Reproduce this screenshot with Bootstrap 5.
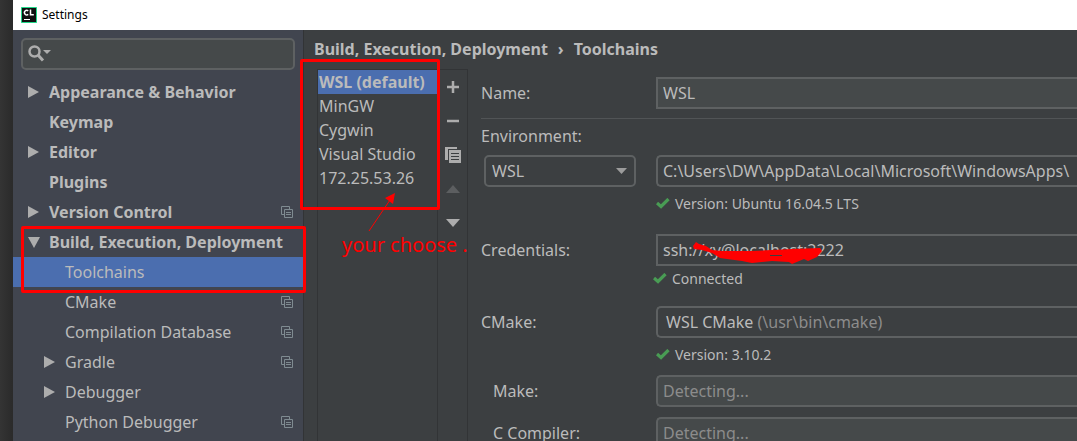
<!DOCTYPE html>
<html lang="en">
<head>
<meta charset="utf-8">
<meta name="viewport" content="width=device-width, initial-scale=1">
<title>Settings</title>
<link href="https://cdn.jsdelivr.net/npm/bootstrap@5.3.0/dist/css/bootstrap.min.css" rel="stylesheet">
<style>
  :root { --panel: #3c3f41; --side: #41454f; --pick: #4b6eaf; --ink: #bbbbbb; --line: #5e6162; --note: #ff0000; }
  body { background: linear-gradient(90deg, #343434, #2b2b2b 12px); color: var(--ink); font: 16px/24px "Noto Sans", "Open Sans", sans-serif; }
  .app-window { margin-left: 13px; background: var(--panel); }
  .app-body, .main-pane, .form-pane { min-width: 0; min-height: 0; }
  .title-bar { height: 30px; background: #fff; color: #000; font-size: 12px; padding-left: 8px; gap: 5px; }
  .side-pane { width: 291px; background: var(--side); border-right: 1px solid #323436; }
  .search-wrap { margin: 8px 8px 7px; }
  .search-box { height: 32px; padding: 0 8px 0 32px; background: #45494a; border: 2px solid var(--line); border-radius: 5px; color: var(--ink); }
  .search-icon { left: 7px; top: 7px; }
  .tree-item { height: 30px; padding: 0 10px 0 15px; color: var(--ink); text-decoration: none; white-space: nowrap; }
  .tree-item .twisty { width: 21px; flex: none; }
  .tree-item.child { padding-left: 31px; }
  .tree-item.top, .crumbs, .chain-list button.active { font-weight: 700; }
  .tree-item.active { background: var(--pick); }
  .frame { border: 3px solid var(--note); border-radius: 2px; pointer-events: none; }
  .frame-tree { inset: -1px -3px -6px 8px; }
  .frame-list { left: -18px; right: -3px; top: -11px; height: 151px; }
  .crumbs { padding: 7px 10px 8px; gap: 10px; }
  .chain-list { width: 120px; margin-left: 13px; border: solid #323436; border-width: 1px 0 0 1px; }
  .chain-list button { display: block; width: 100%; height: 24px; padding: 0 0 0 1px; border: 0; background: none; color: var(--ink); text-align: left; white-space: nowrap; }
  .chain-list button.active { background: var(--pick); }
  .chain-tools { width: 31px; border: solid #323436; border-width: 1px 1px 0; }
  .chain-tools button { height: 34px; border: 0; padding: 0; background: none; display: flex; align-items: center; justify-content: center; }
  .callout { left: 24px; top: 119px; width: 150px; color: var(--note); }
  .callout span { font-size: 20px; line-height: 28px; white-space: nowrap; }
  .form-pane { padding: 8px 0 0 13px; }
  .form-pane label { width: 175px; flex: none; white-space: nowrap; }
  .form-pane .indent { padding-left: 12px; }
  .field { height: 32px; padding: 0 5px; min-width: 0; flex: 1; border: 2px solid var(--line); border-right: 0; background: var(--panel); color: var(--ink); }
  .field.filled { background: #45494a; }
  .field.soft { border-radius: 5px 0 0 5px; }
  .field:disabled { color: #8c8c8c; opacity: 1; }
  .rule { border-top: 1px solid #515456; margin: 9px 0 5px; }
  .env-label { margin-bottom: 7px; }
  .env-select { width: 152px; height: 32px; margin: 0 20px 0 3px; padding: 0 6px; appearance: none; border: 2px solid var(--line); border-radius: 5px; background: none; color: var(--ink); }
  .env-arrow { right: 29px; top: 13px; pointer-events: none; }
  .status { margin: 7px 0 0 175px; gap: 5px; font-size: 14px; line-height: 20px; }
  .status.near { margin: 3px 0 17px 172px; }
  .cred-row { margin-top: 20px; }
  .tool-row { margin-top: 10px; }
  .mute { color: #8c8c8c; }
  .scribble { left: 36px; top: 8px; }
</style>
</head>
<body class="vh-100 overflow-hidden">
<svg class="d-none">
  <symbol id="right" viewBox="0 0 11 12"><path d="M0 0 11 6 0 12z" fill="#adadad"/></symbol>
  <symbol id="down" viewBox="0 0 12 11"><path d="M0 0H12L6 11z" fill="#adadad"/></symbol>
  <symbol id="copy" viewBox="0 0 12 12"><path d="M3 8.500H.5V.5H8.500V3" fill="none" stroke="#7f8b91"/><path d="M3.500 3.500h8v8h-8zM5 6.500h5M5 8.500h5" fill="none" stroke="#7f8b91"/></symbol>
  <symbol id="tick" viewBox="0 0 14 12"><path d="M1 5 5 8.500 12.500 1" fill="none" stroke="#499c54" stroke-width="3.200"/></symbol>
</svg>
<div class="app-window h-100 d-flex flex-column">
  <header class="title-bar d-flex align-items-center flex-shrink-0">
    <svg width="16" height="16" viewBox="0 0 16 16"><path d="M.5.5h15v15H.5z" fill="#101010" stroke="#21d789"/><path d="M7.200 3.800A2.300 2.300 0 1 0 7.200 7.400M9.500 2.500V7.800H12.800" fill="none" stroke="#fff" stroke-width="1.500"/><path d="M3 12.500h6" stroke="#fff"/></svg>
    <span>Settings</span>
  </header>
  <div class="app-body d-flex flex-grow-1">
    <aside class="side-pane flex-shrink-0">
      <div class="search-wrap position-relative">
        <input class="search-box w-100" type="search" aria-label="Search settings">
        <svg class="search-icon position-absolute" width="24" height="18" viewBox="0 0 24 18"><circle cx="6.500" cy="6.500" r="5" fill="none" stroke="#adadad" stroke-width="2.500"/><path d="M10 10 15 15.500" stroke="#adadad" stroke-width="3"/><path d="M15 5h8l-4 4z" fill="#adadad"/></svg>
      </div>
      <nav>
        <a href="#" class="tree-item top d-flex align-items-center"><span class="twisty d-flex"><svg width="11" height="12"><use href="#right"/></svg></span>Appearance &amp; Behavior</a>
        <a href="#" class="tree-item top d-flex align-items-center"><span class="twisty"></span>Keymap</a>
        <a href="#" class="tree-item top d-flex align-items-center"><span class="twisty d-flex"><svg width="11" height="12"><use href="#right"/></svg></span>Editor</a>
        <a href="#" class="tree-item top d-flex align-items-center"><span class="twisty"></span>Plugins</a>
        <a href="#" class="tree-item top d-flex align-items-center"><span class="twisty d-flex"><svg width="11" height="12"><use href="#right"/></svg></span>Version Control<svg class="ms-auto" width="12" height="12"><use href="#copy"/></svg></a>
        <div class="position-relative">
          <a href="#" class="tree-item top d-flex align-items-center"><span class="twisty d-flex"><svg width="12" height="11"><use href="#down"/></svg></span>Build, Execution, Deployment</a>
          <a href="#" class="tree-item child active d-flex align-items-center"><span class="twisty"></span>Toolchains</a>
          <div class="frame frame-tree position-absolute"></div>
        </div>
        <a href="#" class="tree-item child d-flex align-items-center"><span class="twisty"></span>CMake<svg class="ms-auto" width="12" height="12"><use href="#copy"/></svg></a>
        <a href="#" class="tree-item child d-flex align-items-center"><span class="twisty"></span>Compilation Database<svg class="ms-auto" width="12" height="12"><use href="#copy"/></svg></a>
        <a href="#" class="tree-item child d-flex align-items-center"><span class="twisty d-flex"><svg width="11" height="12"><use href="#right"/></svg></span>Gradle<svg class="ms-auto" width="12" height="12"><use href="#copy"/></svg></a>
        <a href="#" class="tree-item child d-flex align-items-center"><span class="twisty d-flex"><svg width="11" height="12"><use href="#right"/></svg></span>Debugger</a>
        <a href="#" class="tree-item child d-flex align-items-center"><span class="twisty"></span>Python Debugger<svg class="ms-auto" width="12" height="12"><use href="#copy"/></svg></a>
      </nav>
    </aside>
    <main class="main-pane d-flex flex-column flex-grow-1">
      <div class="crumbs d-flex"><span>Build, Execution, Deployment</span><span>›</span><span>Toolchains</span></div>
      <div class="d-flex flex-grow-1">
        <div class="chain-list position-relative flex-shrink-0">
          <button class="active">WSL (default)</button>
          <button>MinGW</button>
          <button>Cygwin</button>
          <button>Visual Studio</button>
          <button>172.25.53.26</button>
          <div class="frame frame-list position-absolute"></div>
          <div class="callout position-absolute">
            <svg class="d-block" width="70" height="42" viewBox="0 0 70 42"><path d="M27 42 48 11" stroke="#f00"/><path d="M53 4 43 9 51 15z" fill="#f00"/></svg>
            <span>your choose .</span>
          </div>
        </div>
        <div class="chain-tools d-flex flex-column flex-shrink-0">
          <button aria-label="Add"><svg width="14" height="14"><path d="M7 1V13M1 7H13" stroke="#adadad" stroke-width="2.500"/></svg></button>
          <button aria-label="Remove"><svg width="14" height="14"><path d="M1 7H13" stroke="#adadad" stroke-width="2.500"/></svg></button>
          <button aria-label="Copy"><svg width="16" height="18"><path d="M0 1H12V3H3V14H0z" fill="#adadad"/><path d="M4 4H16V17H4z" fill="#adadad"/><path d="M6 7.500h8M6 10.500h8M6 13.500h8" stroke="#3c3f41"/></svg></button>
          <button aria-label="Move up"><svg width="14" height="8"><path d="M0 8 7 0 14 8z" fill="#5c5e60"/></svg></button>
          <button aria-label="Move down"><svg width="14" height="8"><path d="M0 0 7 8 14 0z" fill="#adadad"/></svg></button>
        </div>
        <form class="form-pane flex-grow-1">
          <div class="d-flex align-items-center"><label for="name">Name:</label><input id="name" class="field filled" value="WSL"></div>
          <div class="rule"></div>
          <label for="env" class="env-label d-block">Environment:</label>
          <div class="d-flex">
            <div class="position-relative"><select id="env" class="env-select"><option>WSL</option></select><svg class="env-arrow position-absolute" width="11" height="6"><path d="M0 0H11L5.500 6z" fill="#9c9c9c"/></svg></div>
            <input class="field soft" aria-label="Environment path" value="C:\Users\DW\AppData\Local\Microsoft\WindowsApps\">
          </div>
          <div class="status d-flex align-items-center"><svg width="14" height="12"><use href="#tick"/></svg>Version: Ubuntu 16.04.5 LTS</div>
          <div class="cred-row d-flex align-items-center"><label for="cred">Credentials:</label>
            <div class="d-flex flex-grow-1 position-relative"><input id="cred" class="field" value="ssh://xy@localhost:2222">
            <svg class="scribble position-absolute" width="132" height="24" viewBox="0 0 132 24"><path d="M1 4 4 0 7 2 14 4 20 8 30 9 60 9 80 8 100 7 128 6 130 9 125 15 116 19 112 17 100 22 97 20 80 19 60 21 50 19 35 17 28 16 20 11 10 8 2 7z" fill="#f00"/><path d="M78 13.500h12" stroke="#3c3f41"/></svg></div>
          </div>
          <div class="status near d-flex align-items-center"><svg width="14" height="12"><use href="#tick"/></svg>Connected</div>
          <div class="d-flex align-items-center"><label for="cmake">CMake:</label><button id="cmake" type="button" class="field soft text-start ps-2">WSL CMake <span class="mute">(\usr\bin\cmake)</span></button></div>
          <div class="status d-flex align-items-center"><svg width="14" height="12"><use href="#tick"/></svg>Version: 3.10.2</div>
          <div class="tool-row d-flex align-items-center"><label for="make" class="indent">Make:</label><input id="make" class="field filled soft" value="Detecting..." disabled></div>
          <div class="tool-row d-flex align-items-center"><label for="cc" class="indent">C Compiler:</label><input id="cc" class="field filled soft" value="Detecting..." disabled></div>
        </form>
      </div>
    </main>
  </div>
</div>
<script src="https://cdn.jsdelivr.net/npm/bootstrap@5.3.0/dist/js/bootstrap.bundle.min.js"></script>
</body>
</html>
